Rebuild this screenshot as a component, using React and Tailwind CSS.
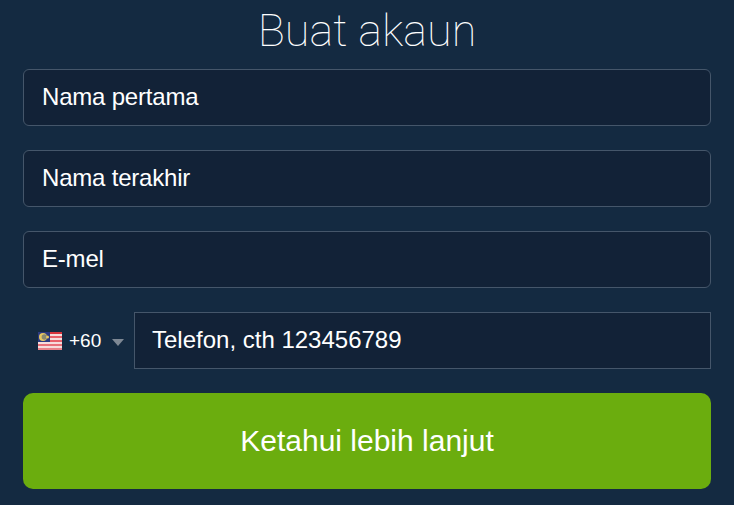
import React from 'react';

const fields = ['Nama pertama', 'Nama terakhir', 'E-mel'];

const Flag = () => (
    <svg width="24" height="18" viewBox="0 0 24 18" className="shrink-0">
        <rect x="0" y="0" width="24" height="18" fill="#f6dcdc" />
        <rect x="0" y="0" width="24" height="2" fill="#d8343c" />
        <rect x="0" y="4" width="24" height="2" fill="#e8606a" />
        <rect x="0" y="8" width="24" height="2" fill="#e8606a" />
        <rect x="0" y="12" width="24" height="2" fill="#e8707a" />
        <rect x="0" y="16" width="24" height="2" fill="#e88088" />
        <rect x="0" y="0" width="12" height="10" fill="#2b3a80" />
        <circle cx="5" cy="5" r="4" fill="#e8c860" />
        <circle cx="6.4" cy="5" r="2.8" fill="#8a8a70" />
        <circle cx="9.5" cy="5" r="1.5" fill="#e8c860" />
    </svg>
);

const App = () => {
    return (
        <div className="w-[734px] h-[505px] overflow-hidden bg-[#142a41] px-[23px] font-['Liberation_Sans',Arial,sans-serif] text-white">
            <h1 className="h-[69px] pt-[5px] text-center font-['Roboto',sans-serif] text-[45px] font-thin leading-[52px]">Buat akaun</h1>
            <div className="flex flex-col gap-6">
                {fields.map((field) => (
                    <div key={field} className="flex h-[57px] items-center rounded-md border border-[#45566a] bg-[#122237] pl-[18px] pb-[2px] text-[24px] tracking-[-0.2px]">
                        {field}
                    </div>
                ))}
                <div className="flex h-[57px] items-center">
                    <div className="flex w-[111px] items-center pl-[15px]">
                        <Flag />
                        <span className="ml-[7px] mt-[1px] text-[19px]">+60</span>
                        <span className="ml-[11px] mt-[3px] h-0 w-0 border-x-[6px] border-t-[7px] border-x-transparent border-t-[#7e8894]"></span>
                    </div>
                    <div className="flex h-full flex-1 items-center border border-[#45566a] bg-[#122237] pl-[17px] pb-[2px] text-[24px]">
                        Telefon, cth 123456789
                    </div>
                </div>
                <button className="h-[96px] rounded-[10px] bg-[#6bad0e] pb-[2px] text-[30px] text-white">Ketahui lebih lanjut</button>
            </div>
        </div>
    );
};

export default App;
